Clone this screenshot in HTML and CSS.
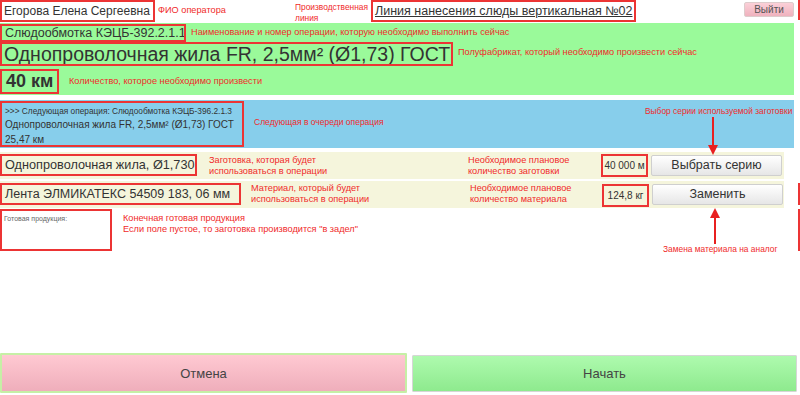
FILE: index.html
```html
<!DOCTYPE html>
<html lang="ru">
<head>
<meta charset="utf-8">
<title>Операция</title>
<link rel="stylesheet" href="styles.css">
</head>
<body>
<div class="page">
  <div class="top">
    <div class="rbox name">Егорова Елена Сергеевна</div>
    <div class="note note-fio">ФИО оператора</div>
    <div class="note note-line">Производственная<br>линия</div>
    <div class="rbox linebox">Линия нанесения слюды вертикальная №02</div>
    <button class="exit">Выйти</button>
    <div class="edge edge-top"></div>
  </div>

  <div class="green">
    <div class="grow g1">
      <div class="rbox opname">Слюдообмотка КЭЦБ-392.2.1.1</div>
      <div class="note note-op">Наименование и номер операции, которую необходимо выполнить сейчас</div>
    </div>
    <div class="grow g2">
      <div class="rbox product">Однопроволочная жила FR, 2,5мм² (Ø1,73) ГОСТ</div>
      <div class="note note-prod">Полуфабрикат, который необходимо произвести сейчас</div>
    </div>
    <div class="grow g3">
      <div class="rbox amount">40 км</div>
      <div class="note note-amount">Количество, которое необходимо произвести</div>
    </div>
  </div>

  <div class="blue">
    <div class="rbox next">
      <div class="next-l1">&gt;&gt;&gt; Следующая операция: Слюдообмотка КЭЦБ-396.2.1.3</div>
      <div class="next-l2">Однопроволочная жила FR, 2,5мм² (Ø1,73) ГОСТ</div>
      <div class="next-l3">25,47 км</div>
    </div>
    <div class="note note-next">Следующая в очереди операция</div>
    <div class="series-hint">
      <div class="note note-small">Выбор серии используемой заготовки</div>
      <svg class="arrow-down" width="12" height="38" viewBox="0 0 12 38">
        <line x1="6" y1="0" x2="6" y2="30" stroke="#e82020" stroke-width="2"/>
        <polygon points="1,28 11,28 6,38" fill="#e82020"/>
      </svg>
    </div>
  </div>

  <div class="lrow lrow1">
    <div class="beige">
      <div class="rbox blank">Однопроволочная жила, Ø1,730</div>
      <div class="note note-blank">Заготовка, которая будет<br>использоваться в операции</div>
      <div class="note note-plan1">Необходимое плановое<br>количество заготовки</div>
      <div class="rbox qty">40 000 м</div>
      <button class="gbtn">Выбрать серию</button>
    </div>
  </div>

  <div class="lrow lrow2">
    <div class="beige">
      <div class="rbox material">Лента ЭЛМИКАТЕКС 54509 183, 06 мм</div>
      <div class="note note-mat">Материал, который будет<br>использоваться в операции</div>
      <div class="note note-plan2">Необходимое плановое<br>количество материала</div>
      <div class="rbox qty qty2">124,8 кг</div>
      <button class="gbtn">Заменить</button>
    </div>
    <div class="edge edge-r2"></div>
  </div>

  <div class="done-row">
    <div class="rbox done">Готовая продукция:</div>
    <div class="note note-done">Конечная готовая продукция<br>Если поле пустое, то заготовка производится "в задел"</div>
    <div class="replace-hint">
      <svg class="arrow-up" width="12" height="36" viewBox="0 0 12 36">
        <polygon points="1,10 11,10 6,0" fill="#e82020"/>
        <line x1="6" y1="8" x2="6" y2="36" stroke="#e82020" stroke-width="2"/>
      </svg>
      <div class="note note-small">Замена материала на аналог</div>
    </div>
    <div class="edge edge-done"></div>
  </div>

  <div class="actions">
    <button class="act cancel">Отмена</button>
    <button class="act start">Начать</button>
  </div>
</div>
</body>
</html>
```

FILE: styles.css
```css
* { box-sizing: border-box; }
html, body { margin: 0; padding: 0; background: #fff; }
body {
  width: 800px;
  height: 395px;
  overflow: hidden;
  font-family: "Liberation Sans", Arial, sans-serif;
  color: #333;
}
.page {
  display: flex;
  flex-direction: column;
  height: 395px;
}
.top > *, .grow > *, .blue > *, .lrow > *, .beige > *, .done-row > *, .actions > * {
  flex-shrink: 0;
}
.rbox {
  border: 2px solid #ec3434;
  white-space: nowrap;
  overflow: hidden;
}
.note {
  font-family: "Liberation Sans", Arial, sans-serif;
  font-size: 9.2px;
  line-height: 11px;
  color: #f02a2a;
  white-space: nowrap;
}
.note-small { font-size: 8.4px; }
.edge {
  width: 2px;
  background: #ec3434;
}

/* header */
.top {
  display: flex;
  align-items: flex-start;
  height: 23px;
}
.name {
  width: 155px;
  height: 22px;
  font-size: 12px;
  line-height: 18px;
  padding-left: 2px;
}
.note-fio { margin-left: 3px; width: 137px; padding-top: 5px; }
.note-line { width: 76px; padding-top: 2px; line-height: 11px; font-size: 8.4px; }
.linebox {
  width: 265px;
  height: 22px;
  font-size: 12.5px;
  line-height: 18px;
  padding-left: 2px;
  text-decoration: underline;
}
.exit {
  margin-left: 108px;
  margin-top: 2px;
  width: 50px;
  height: 15px;
  padding: 0;
  border: 1px solid #dcc;
  border-radius: 2px;
  background: linear-gradient(#fbd0d8, #efb2be);
  font-family: "Liberation Sans", Arial, sans-serif;
  font-size: 10px;
  line-height: 13px;
  color: #555;
}
.edge-top { margin-left: 4px; height: 20px; }

/* green panel */
.green {
  width: 794px;
  height: 72px;
  background: #9afa9a;
  padding-top: 1px;
}
.grow { display: flex; align-items: flex-start; }
.opname {
  width: 186px;
  height: 18px;
  font-size: 12.5px;
  line-height: 14px;
  padding-left: 3px;
}
.note-op { margin-left: 5px; padding-top: 3px; }
.product {
  width: 453px;
  height: 24px;
  font-size: 19.5px;
  line-height: 20px;
  padding-left: 2px;
}
.note-prod { margin-left: 5px; padding-top: 5px; }
.g3 { margin-top: 3px; }
.amount {
  width: 59px;
  height: 25px;
  font-size: 18px;
  font-weight: bold;
  line-height: 21px;
  padding-left: 4px;
}
.note-amount { margin-left: 10px; padding-top: 7px; }

/* blue panel */
.blue {
  display: flex;
  align-items: flex-start;
  margin-top: 5px;
  width: 794px;
  height: 48px;
  background: #87ceeb;
  padding-top: 1px;
}
.next {
  width: 244px;
  height: 46px;
  padding: 2px 0 0 3px;
}
.next-l1 { font-size: 8.3px; line-height: 12px; }
.next-l2 { font-size: 10px; line-height: 15px; }
.next-l3 { font-size: 10px; line-height: 15px; }
.note-next { margin-left: 10px; width: 391px; padding-top: 16px; font-size: 8.5px; }
.series-hint {
  display: flex;
  flex-direction: column;
  padding-top: 5px;
}
.arrow-down {
  display: block;
  position: relative;
  margin-left: 62px;
  margin-top: 0;
}

/* beige rows */
.lrow { display: flex; align-items: flex-start; }
.lrow1 { margin-top: 4px; }
.lrow2 { margin-top: 2px; }
.beige {
  display: flex;
  align-items: flex-start;
  width: 784px;
  height: 27px;
  background: #f5f5dc;
  padding-top: 2px;
}
.blank {
  width: 197px;
  height: 22px;
  font-size: 12.7px;
  line-height: 18px;
  padding-left: 3px;
}
.note-blank { margin-left: 12px; width: 259px; padding-top: 1px; }
.note-plan1 { width: 133px; padding-top: 1px; }
.material {
  width: 241px;
  height: 22px;
  font-size: 12.5px;
  line-height: 18px;
  padding-left: 3px;
}
.note-mat { margin-left: 10px; width: 219px; padding-top: 0; }
.note-plan2 { width: 132px; padding-top: 0; }
.qty {
  width: 47px;
  height: 23px;
  font-size: 10px;
  line-height: 19px;
  text-align: center;
}
.qty2 { margin-top: 1px; }
.gbtn {
  margin-left: 3px;
  width: 131px;
  height: 21px;
  padding: 0;
  border: 1px solid #cfcfcf;
  border-radius: 2px;
  background: linear-gradient(#ffffff, #e6e6e6);
  font-family: "Liberation Sans", Arial, sans-serif;
  font-size: 12.5px;
  line-height: 19px;
  color: #333;
  margin-top: 1px;
}
.edge-r2 { margin-left: 14px; height: 22px; margin-top: 2px; }

/* done row */
.done-row {
  display: flex;
  align-items: flex-start;
  margin-top: 1px;
}
.done {
  width: 112px;
  height: 42px;
  font-family: "Liberation Sans", Arial, sans-serif;
  font-size: 7px;
  color: #666;
  padding: 4px 0 0 2px;
}
.note-done {
  margin-left: 11px;
  width: 540px;
  line-height: 11px;
  padding-top: 4px;
}
.replace-hint {
  display: flex;
  flex-direction: column;
  width: 135px;
}
.arrow-up { display: block; margin-left: 46px; margin-top: -1px; }
.edge-done { height: 42px; margin-top: 0; }

/* bottom */
.actions {
  display: flex;
  align-items: flex-start;
  margin-top: auto;
  margin-bottom: 2px;
  gap: 5px;
}
.act {
  font-family: "Liberation Sans", Arial, sans-serif;
  font-size: 13px;
  color: #444;
  padding: 0;
  border-radius: 1px;
}
.cancel {
  width: 407px;
  height: 40px;
  border: 2px solid #c6efa6;
  background: linear-gradient(#ffc9d2, #efaebb);
}
.start {
  width: 385px;
  height: 37px;
  margin-top: 2px;
  border: 1px solid #d6d6d6;
  background: linear-gradient(#aefaae, #8eea8e);
}
```
